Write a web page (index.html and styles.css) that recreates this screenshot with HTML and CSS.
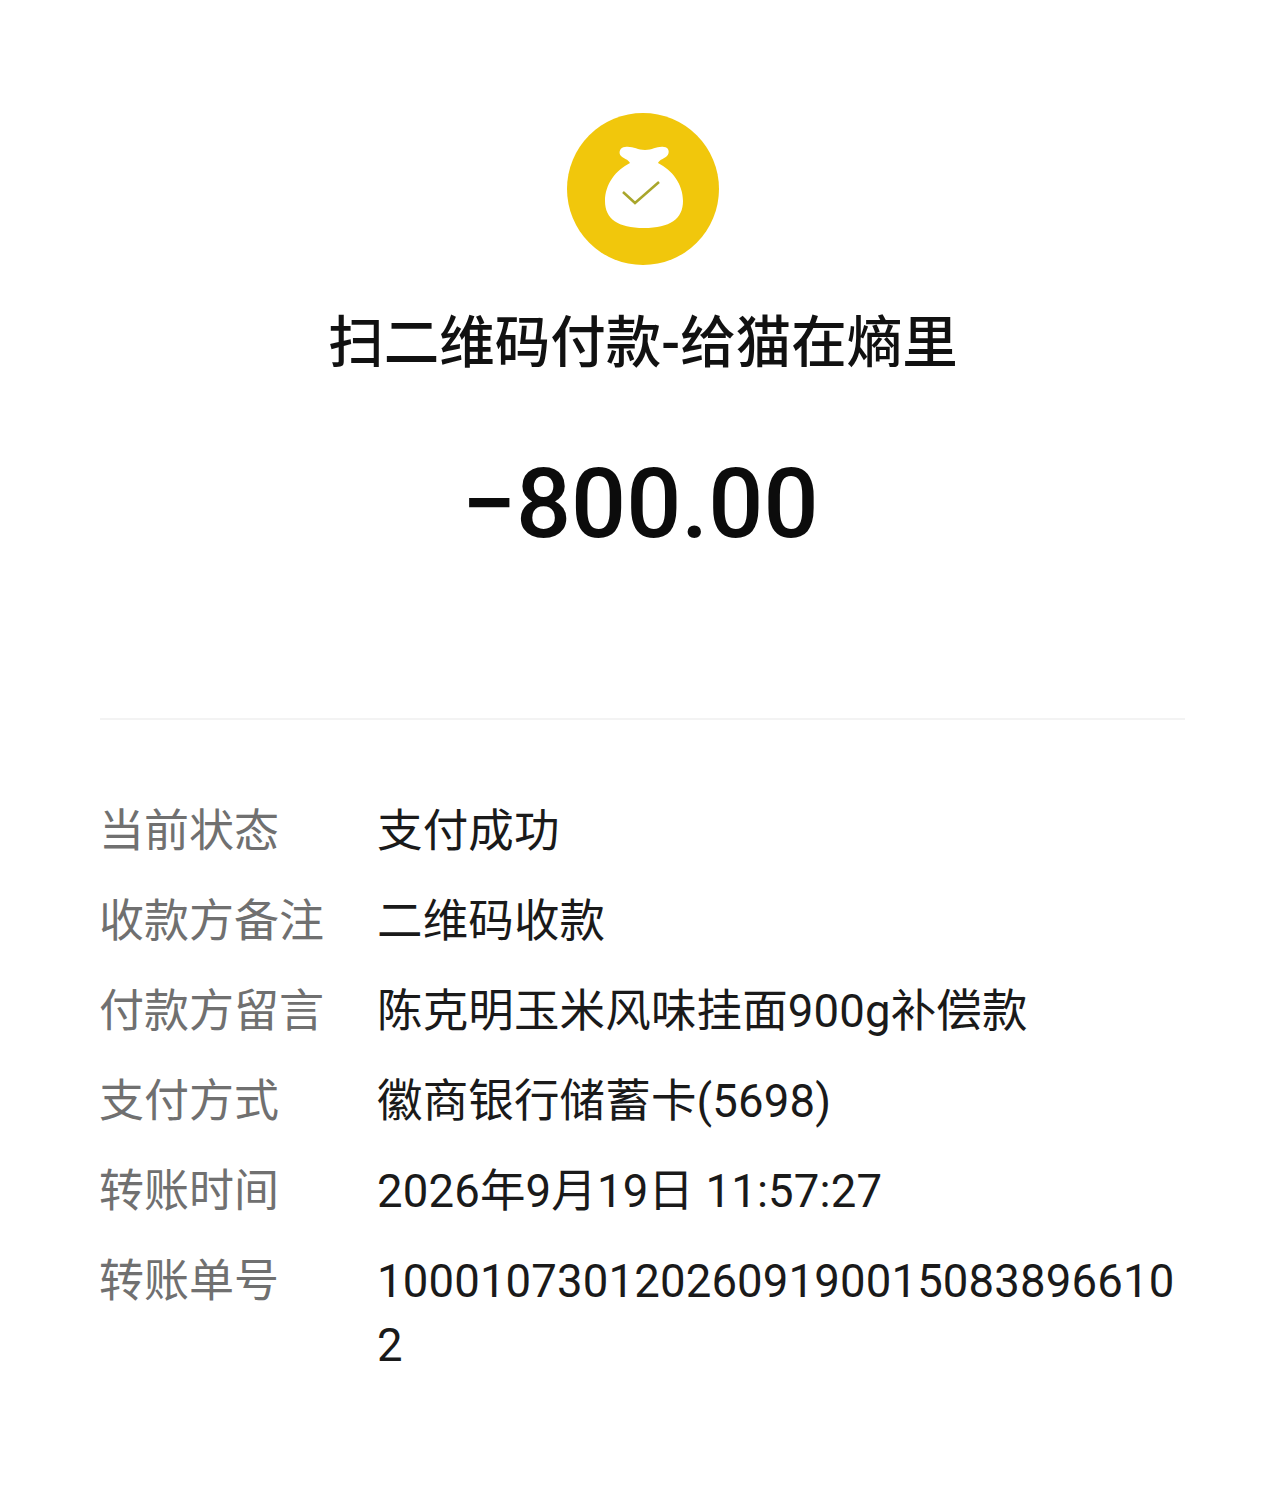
FILE: index.html
```html
<!DOCTYPE html>
<html lang="zh-CN">

<head>
  <meta charset="UTF-8">
  <meta name="viewport" content="width=device-width, initial-scale=1.0">
  <title>账单详情</title>
  <link rel="stylesheet" href="styles.css">
</head>

<body>
  <div class="summary">
    <svg class="logo" viewBox="0 0 152 152" width="152" height="152">
      <circle cx="76" cy="76" r="76" fill="#f1c70c" />
      <path fill="#fff" d="M58 34C66 33 70 37 78 37C86 37 90 33 97 34C102 34 103 40 100 43C97 46 93 46 91 50C105 57 116 71 116 88C116 106 103 115 77 115C51 115 38 106 38 88C38 71 49 57 63 50C61 46 57 46 54 43C51 40 53 34 58 34Z" />
      <path fill="none" stroke="#a9a62c" stroke-width="2.5" d="M56 79l12 11 24-21" />
    </svg>
    <h1 class="name">扫二维码付款-给猫在熵里</h1>
    <div class="amount">−800.00</div>
  </div>
  <hr>
  <div class="details">
    <div class="label">当前状态</div>
    <div class="value">支付成功</div>
    <div class="label">收款方备注</div>
    <div class="value">二维码收款</div>
    <div class="label">付款方留言</div>
    <div class="value">陈克明玉米风味挂面900g补偿款</div>
    <div class="label">支付方式</div>
    <div class="value">徽商银行储蓄卡(5698)</div>
    <div class="label">转账时间</div>
    <div class="value">2026年9月19日 11:57:27</div>
    <div class="label">转账单号</div>
    <div class="value">10001073012026091900150838966102</div>
  </div>
</body>

</html>
```

FILE: styles.css
```css
body {
  margin: 0;
  background-color: #fff;
  font-family: Roboto, "Noto Sans CJK SC", sans-serif;
}

.summary {
  display: flex;
  flex-direction: column;
  align-items: center;
  padding-top: 113px;
  padding-left: 6px;
}

.logo {
  display: block;
}

.name {
  margin: 40px 0 0;
  font-size: 55.5px;
  line-height: 78px;
  font-weight: 500;
  color: #111;
  white-space: nowrap;
}

.amount {
  margin: 63px 6px 0 0;
  font-size: 97px;
  line-height: 116px;
  font-weight: 500;
  color: #0c0c0c;
}

hr {
  border: none;
  border-top: 2px solid #f3f3f3;
  margin: 156px 95px 0 100px;
}

.details {
  display: grid;
  grid-template-columns: 278px 803px;
  row-gap: 26px;
  margin: 80px 0 0 99px;
  font-size: 45.5px;
  line-height: 64px;
}

.label {
  font-size: 45px;
  color: #707070;
}

.value {
  color: #1a1a1a;
  letter-spacing: 0.15px;
  word-break: break-all;
}
```
